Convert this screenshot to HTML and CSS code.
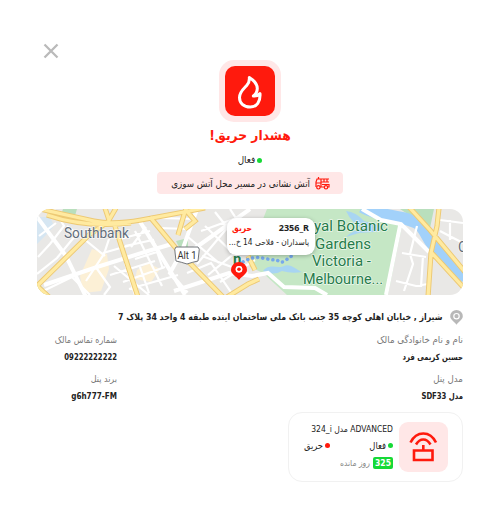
FILE: index.html
```html
<!DOCTYPE html>
<html lang="fa" dir="rtl">
<head>
<meta charset="utf-8">
<title>هشدار حریق</title>
<link rel="stylesheet" href="styles.css">
</head>
<body>
<main class="dialog">
  <button class="close" aria-label="بستن"><svg width="16" height="16" viewBox="0 0 16 16"><path d="M1.5 1.5l13 13M14.5 1.5l-13 13"/></svg></button>
  <header class="alert">
    <div class="alert-icon"><svg width="50" height="50" viewBox="0 0 50 50"><path d="M24.3 11.5C28.3 14 32.3 18.3 32.3 22.500C32.3 25.500 30.500 28.300 28.400 30C31.200 30.300 33.500 29.300 35 27.600C35.600 35.800 31.800 41 25.300 41C18.500 41 14.500 37 14.500 31.500C14.500 25.600 18.800 22.800 21.700 19.500C24 17 24.600 14.500 24.300 11.500Z"/></svg></div>
    <h1>هشدار حریق!</h1>
    <div class="status"><i class="dot green"></i><span>فعال</span></div>
    <div class="notice">
      <svg width="15" height="13" viewBox="0 0 15 13"><path d="M1 10V5l1-3h4v8M1 6h5M6 2h8M6 5h8M9 2v3M12 2v3M7 7.5h7V10h-1M5 10h4M3.5 0v2"/><circle cx="3.4" cy="10.3" r="1.7"/><circle cx="11" cy="10.3" r="1.7"/></svg>
      <span>آتش نشانی در مسیر محل آتش سوزی</span>
    </div>
  </header>
  <section class="map">
    <svg class="map-art" width="426" height="86" viewBox="0 0 426 86">
      <rect width="426" height="86" fill="#e9e8e6"/>
      <path d="M0 8H13L17 17L9 26L0 35Z" fill="#d6e6f2"/>
      <path d="M0 73L13 86H0ZM139 32L151 29V38H142ZM26 0H40L37 10L22 12ZM363 0H397L393 19L375 8Z" fill="#b9dfbd"/>
      <path d="M55 40L70 45L72 60L64 82L46 84L43 67ZM100 61L111 54L123 60L114 73L98 70Z" fill="#fcf0d6"/>
      <path d="M230 0H330L365 17L351 86H250L226 64L213 58L212 45Z" fill="#c5e7c5"/>
      <path d="M226 62C232 54 241 60 247 57S260 61 265 63Q255 65 245 62Q236 67 226 62ZM309 2Q319 3 327 12L344 17Q349 22 336 23L322 24L309 28Q317 20 327 20Q315 15 309 2Z" fill="#a8d5f2"/>
      <path d="M325-2C345 9 367 5 383 16C391 25 391 34 404 44L429 69" fill="none" stroke="#a2d1fa" stroke-width="12"/>
      <g fill="none" stroke="#fff">
        <path stroke-width="4" d="M0 8L29 47L50 90M7 76L60 58L111 42L135 35M102 11L148 86M160 0L145 42L133 64L150 84M154 42L213 0M137 82L192 64L215 67L231 64L247 78L278 79L290 86M325 0L344 11L364 15L392 43M363 17L349 86"/>
        <path stroke-width="2.2" d="M17 0L27 17L13 35L1 48M2 27L19 14M30 17L47 30L68 47M38 27L20 49L0 65M29 47L58 22M49 72L67 45L72 30M58 57L73 78L67 86M66 44L94 36M83 30L113 22M77 57L112 86M88 54L98 86M88 37L116 31L126 60M98 22L125 77M109 18L94 38M98 50L123 42M73 66L118 52M86 73L128 58M92 80L141 66M103 58L112 84M124 9L158 10M122 19L152 20M164 22L205 7M151 28L182 54M168 17L200 48M178 3L209 42M160 55L191 18M171 66L205 38M183 73L218 51M165 47L211 64M193 0L218 39M150 64L174 54L196 86M0 85L35 68L53 86M365 44L389 48M380 17L373 45L376 55L367 82M386 47L384 78M359 72L379 77L391 75M403 11L426 14M403 22L426 34M413 11V31"/>
      </g>
      <g fill="none" stroke="#edc974" stroke-width="5.2">
        <path id="main-roads" d="M3 0Q38 8 57 12T104 11T168-1M10 6Q48 19 94 14M68-1L72 11L79-1M72 12L52 26L0 77L12 88M77 14L84 36L101 88M113 8L142 43L187 89M149-1L141 26M148 0L158 12L148 20M372-2L393 21L428 63M402-1L400 17L394 44L391 88M394 43L428 80M190 88L211 75L222 70M211 47L218 61"/>
      </g>
      <use href="#main-roads" fill="none" stroke="#ffeaa0" stroke-width="3.3"/>
      <g class="labels" direction="ltr">
        <text x="27" y="28.500" font-size="14.5" textLength="65" lengthAdjust="spacingAndGlyphs" fill="#626d7a">Southbank</text>
        <text x="277" y="21.500" font-size="15" textLength="74" lengthAdjust="spacingAndGlyphs" fill="#267c4b">yal Botanic</text>
        <text x="278" y="39.500" font-size="15" textLength="56" lengthAdjust="spacingAndGlyphs" fill="#267c4b">Gardens</text>
        <text x="275" y="57" font-size="15" textLength="59" lengthAdjust="spacingAndGlyphs" fill="#267c4b">Victoria -</text>
        <text x="266" y="75" font-size="15" textLength="80" lengthAdjust="spacingAndGlyphs" fill="#267c4b">Melbourne...</text>
        <text x="196" y="54.500" font-size="15" font-weight="bold" fill="#267c4b">n</text>
        <text x="421" y="43" font-size="14" fill="#626d7a">C</text>
        <path d="M139 38H161Q163 40 162 43L161 52Q156 53 150 55Q144 53 139 52L138 43Q137 40 139 38Z" fill="#fff" stroke="#73767a"/>
        <text x="140.500" y="50" font-size="10" textLength="19" lengthAdjust="spacingAndGlyphs" fill="#333">Alt 1</text>
      </g>
      <path d="M206 53Q216 47 225 49T240 51Q245 55 249 51L256 46" fill="none" stroke="#77a9ec" stroke-width="3.500" stroke-linecap="round" stroke-dasharray=".1 5"/>
      <path fill-rule="evenodd" d="M202 53a8 8 0 0 1 8 8c0 4-5 6-8 10c-3-4-8-6-8-10a8 8 0 0 1 8-8ZM202 57a3.300 3.300 0 1 0 0 6.600a3.300 3.300 0 0 0 0-6.600Z" fill="#ff1a0d"/><circle cx="202" cy="60.300" r="3.300" fill="#fff"/><circle cx="202" cy="60.300" r="1.800" fill="#ff1a0d"/>
    </svg>
    <div class="tip">
      <div class="tip-row"><bdi dir="ltr" class="tip-id">2356_R</bdi><b>حریق</b></div>
      <div class="tip-address">پاسداران - فلاحی 14 خ...</div>
    </div>
  </section>
  <div class="address"><svg width="13" height="15" viewBox="0 0 13 15"><path d="M6.500 0a6.300 6.300 0 0 1 6.300 6.300c0 3.500-4 5-6.300 8.400c-2.300-3.400-6.300-4.900-6.300-8.400A6.300 6.300 0 0 1 6.500 0Z" fill="#b8b8b8"/><circle cx="6.500" cy="6.200" r="2.700" fill="#b8b8b8" stroke="#fff" stroke-width="1.200"/></svg><span>شیراز , خیابان اهلی کوچه 35 جنب بانک ملی ساختمان اینده طبقه 4 واحد 34 پلاک 7</span></div>
  <dl class="details">
    <div><dt class="wide">نام و نام خانوادگی مالک</dt><dd>حسین کریمی فرد</dd></div>
    <div><dt>شماره تماس مالک</dt><dd>09222222222</dd></div>
    <div><dt class="wide">مدل پنل</dt><dd>مدل <bdi>SDF33</bdi></dd></div>
    <div><dt>برند پنل</dt><dd class="brand" dir="ltr">g6h777-FM</dd></div>
  </dl>
  <article class="device">
    <div class="device-icon"><svg width="49" height="50" viewBox="0 0 49 50"><path d="M15 28.500H33.500V38H15ZM24.300 28V23M11.500 20.500Q16 11.500 24.300 11.500T37 20.500M17 22.500Q20 17.500 24.300 17.500T31.500 22.500"/></svg></div>
    <div class="device-info">
      <div class="model"><bdi>ADVANCED</bdi> مدل <bdi dir="ltr">324_i</bdi></div>
      <div class="states"><div class="status"><i class="dot green"></i><span>فعال</span></div><div class="status"><i class="dot red"></i><span>حریق</span></div></div>
      <div class="remaining"><b>325</b><span>روز مانده</span></div>
    </div>
  </article>
</main>
</body>
</html>
```
FILE: styles.css
```css
* { box-sizing: border-box; }
body { margin: 0; background: #fff; color: #222; font-family: "DejaVu Sans Condensed", "DejaVu Sans", sans-serif; font-size: 9px; }
.dialog { width: 500px; height: 519px; padding: 43px 37px 0; overflow: hidden; }
svg { display: block; flex: none; }
span, bdi { white-space: nowrap; }
.close { display: block; width: 16px; height: 16px; margin: 0 auto 0 6px; padding: 0; border: 0; background: none; }
.close path { stroke: #bababa; stroke-width: 2.3; }
.alert { display: flex; flex-direction: column; align-items: center; margin-top: 1px; }
.alert-icon { width: 62px; height: 62px; padding: 6px; border-radius: 15px; background: #ffe7e7; }
.alert-icon svg { border-radius: 10px; background: #ff1a0d; }
.alert-icon path { fill: none; stroke: #fff; stroke-width: 3; stroke-linejoin: round; }
h1 { margin: 3px 0 0; height: 20px; line-height: 20px; font-size: 13.7px; color: #ff1a0d; white-space: nowrap; }
.status { display: flex; align-items: center; gap: 2px; height: 14px; line-height: 14px; font-size: 9.8px; }
.alert > .status { margin-top: 8px; margin-bottom: 5px; }
.dot { width: 5px; height: 5px; border-radius: 50%; }
.green { background: #16d936; }
.red { background: #ff1a0d; }
.notice { display: flex; align-items: center; gap: 5px; width: 186px; height: 22px; padding-right: 13px; border-radius: 4px; background: #ffe7e7; font-size: 9.7px; }
.notice path, .notice circle { fill: none; stroke: #ff1a0d; stroke-width: 1.2; }
.map { position: relative; height: 86px; margin-top: 15px; border-radius: 13px; overflow: hidden; }
.labels { font-family: Roboto, sans-serif; }
.labels text { paint-order: stroke; stroke: #ffffffb0; stroke-width: 1.5; }
.tip { position: absolute; left: 190px; top: 9px; width: 88px; height: 37px; padding: 3px 6px 0 5px; border-radius: 9px; background: #fff; box-shadow: 0 1px 4px #0004; }
.tip-row { display: flex; justify-content: space-between; height: 14px; line-height: 14px; font-size: 8.5px; }
.tip-row b { color: #ff1a0d; }
.tip-id { font: bold 9px/14px "Noto Sans", sans-serif; }
.tip-address { height: 14px; line-height: 14px; font-size: 8.3px; white-space: nowrap; }
.address { display: flex; align-items: center; gap: 7px; height: 16px; margin-top: 14px; font-weight: bold; }
.address span { transform: scaleX(.97); transform-origin: right; }
.details { display: grid; grid-template-columns: 346px 80px; row-gap: 7px; margin: 7px 0 0; }
.details dt, .details dd { height: 16px; margin: 0; line-height: 16px; white-space: nowrap; text-align: right; }
.details dt { color: #777; font-size: 8.9px; }
.details dt.wide { font-size: 9.65px; }
.details dd { margin-top: 1px; margin-bottom: -1px; font-size: 8.5px; font-weight: bold; transform: scaleX(.9); transform-origin: right; }
.details dd.brand { transform: scaleX(.95); }
.device { display: flex; gap: 6px; width: 175px; height: 70px; margin-top: 9px; padding: 9px 14px; border: 1px solid #f1f1f1; border-radius: 14px; }
.device-icon { flex: none; width: 49px; height: 50px; border-radius: 9px; background: #ffe7e7; }
.device-icon path { fill: none; stroke: #ff1a0d; stroke-width: 2.6; }
.device-info { width: 90px; }
.model { height: 14px; line-height: 14px; font-size: 8.5px; white-space: nowrap; }
.states { display: flex; height: 19px; align-items: center; }
.states .status { flex: none; width: 63px; font-size: 9.3px; }
.remaining { display: flex; align-items: center; gap: 3px; height: 16px; color: #888; font-size: 8.5px; }
.remaining b { width: 20px; height: 12px; line-height: 12px; text-align: center; border-radius: 2px; background: #16d936; color: #fff; }
```
